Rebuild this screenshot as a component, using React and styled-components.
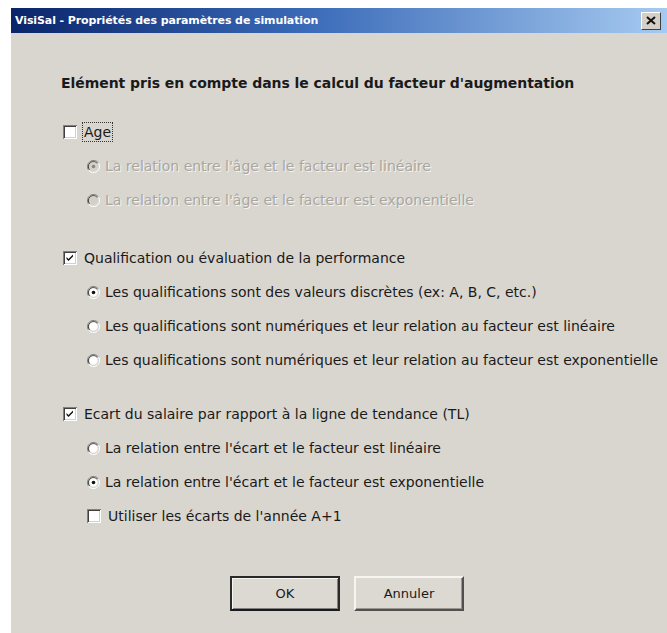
import React from 'react';
import styled, { createGlobalStyle } from 'styled-components';

const GlobalStyle = createGlobalStyle`
  html, body {
    margin: 0;
    padding: 0;
    background: #ffffff;
  }
`;

const Window = styled.div`
  margin: 8px 0 0 11px;
  width: 656px;
  height: 625px;
  background: #d9d6d0;
  display: flex;
  flex-direction: column;
  font-family: "DejaVu Sans", Verdana, sans-serif;
  color: #1a1a1a;
`;

const TitleBar = styled.div`
  height: 25px;
  display: flex;
  align-items: center;
  justify-content: space-between;
  padding: 0 6px 0 4px;
  background: linear-gradient(90deg, #0a246a 0%, #3a6ab8 45%, #a6caf0 100%);
`;

const Title = styled.span`
  color: #ffffff;
  font-weight: bold;
  font-size: 11px;
  letter-spacing: -0.1px;
`;

const CloseButton = styled.div`
  width: 18px;
  height: 16px;
  background: #d4d0c8;
  border: 1px solid;
  border-color: #ffffff #404040 #404040 #ffffff;
  display: flex;
  align-items: center;
  justify-content: center;
`;

const Body = styled.div`
  flex: 1;
  display: flex;
  flex-direction: column;
  padding: 41px 0 0 50px;
`;

const Heading = styled.div`
  font-size: 14px;
  font-weight: bold;
  line-height: 18px;
  letter-spacing: -0.05px;
  margin-bottom: 23px;
`;

const Group = styled.div`
  display: flex;
  flex-direction: column;
  margin-top: ${({ $gap }) => $gap || 0}px;
`;

const Row = styled.div`
  height: 34px;
  display: flex;
  align-items: center;
  gap: ${({ $radio }) => ($radio ? 3 : 5)}px;
  padding-left: ${({ $indent }) => ($indent ? 26 : 2)}px;

  svg {
    flex-shrink: 0;
  }
`;

const Label = styled.span`
  font-size: 14px;
  line-height: 18px;
  white-space: nowrap;
  color: ${({ $disabled }) => ($disabled ? '#a9a6a0' : '#1a1a1a')};
  text-shadow: ${({ $disabled }) => ($disabled ? '1px 1px 0 #f4f3f0' : 'none')};
  border: 1px dotted ${({ $focus }) => ($focus ? '#333' : 'transparent')};
  padding: 0 1px;
`;

const Buttons = styled.div`
  display: flex;
  gap: 14px;
  margin: 43px 0 0 169px;
`;

const Button = styled.div`
  width: 110px;
  height: 35px;
  box-sizing: border-box;
  display: flex;
  align-items: center;
  justify-content: center;
  font-size: 13px;
  background: #dcd9d3;
  border: 2px solid;
  border-color: ${({ $default }) =>
    $default ? '#2a2a2a #2a2a2a #1a1a1a #2a2a2a' : '#f6f5f2 #505050 #505050 #f6f5f2'};
  box-shadow: ${({ $default }) =>
    $default ? 'inset 1px 1px 0 #f6f5f2, inset -1px -1px 0 #808080' : 'inset -1px -1px 0 #9a978f'};
`;

const Checkbox = ({ checked }) => (
  <svg width="14" height="14" viewBox="0 0 14 14">
    <rect x="0" y="0" width="14" height="14" fill="#808080" />
    <rect x="1" y="1" width="13" height="13" fill="#ffffff" />
    <rect x="1" y="1" width="12" height="12" fill="#404040" />
    <rect x="2" y="2" width="11" height="11" fill="#d4d0c8" />
    <rect x="2" y="2" width="10" height="10" fill="#ffffff" />
    {checked && (
      <path d="M3.5 6 L5.5 8 L10 3.5 L10 5.5 L5.5 10 L3.5 8 Z" fill="#111" />
    )}
  </svg>
);

const Radio = ({ checked, disabled }) => (
  <svg width="13" height="13" viewBox="0 0 13 13">
    <path d="M11.5 3 A6 6 0 0 0 1.5 10" stroke="#808080" strokeWidth="1" fill="none" />
    <path d="M10.3 3.5 A5 5 0 0 0 2.5 9.8" stroke="#404040" strokeWidth="1" fill="none" />
    <path d="M1.5 10 A6 6 0 0 0 11.5 3" stroke="#ffffff" strokeWidth="1" fill="none" />
    <circle cx="6.5" cy="6.5" r="4.2" fill={disabled ? '#d4d0c8' : '#ffffff'} />
    {checked && <circle cx="6.5" cy="6.5" r="1.8" fill={disabled ? '#8a8782' : '#111'} />}
  </svg>
);

const CheckRow = ({ checked, focus, children }) => (
  <Row>
    <Checkbox checked={checked} />
    <Label $focus={focus}>{children}</Label>
  </Row>
);

const RadioRow = ({ checked, disabled, children }) => (
  <Row $indent $radio>
    <Radio checked={checked} disabled={disabled} />
    <Label $disabled={disabled}>{children}</Label>
  </Row>
);

const App = () => {
  return (
    <>
      <GlobalStyle />
      <Window>
        <TitleBar>
          <Title>VisiSal - Propriétés des paramètres de simulation</Title>
          <CloseButton>
            <svg width="10" height="9" viewBox="0 0 10 9">
              <path d="M1 1 L9 8 M9 1 L1 8" stroke="#111" strokeWidth="2" />
            </svg>
          </CloseButton>
        </TitleBar>
        <Body>
          <Heading>Elément pris en compte dans le calcul du facteur d'augmentation</Heading>

          <Group>
            <CheckRow focus>Age</CheckRow>
            <RadioRow checked disabled>La relation entre l'âge et le facteur est linéaire</RadioRow>
            <RadioRow disabled>La relation entre l'âge et le facteur est exponentielle</RadioRow>
          </Group>

          <Group $gap={24}>
            <CheckRow checked>Qualification ou évaluation de la performance</CheckRow>
            <RadioRow checked>Les qualifications sont des valeurs discrètes (ex: A, B, C, etc.)</RadioRow>
            <RadioRow>Les qualifications sont numériques et leur relation au facteur est linéaire</RadioRow>
            <RadioRow>Les qualifications sont numériques et leur relation au facteur est exponentielle</RadioRow>
          </Group>

          <Group $gap={20}>
            <CheckRow checked>Ecart du salaire par rapport à la ligne de tendance (TL)</CheckRow>
            <RadioRow>La relation entre l'écart et le facteur est linéaire</RadioRow>
            <RadioRow checked>La relation entre l'écart et le facteur est exponentielle</RadioRow>
            <Row $indent>
              <Checkbox />
              <Label>Utiliser les écarts de l'année A+1</Label>
            </Row>
          </Group>

          <Buttons>
            <Button $default>OK</Button>
            <Button>Annuler</Button>
          </Buttons>
        </Body>
      </Window>
    </>
  );
};

export default App;
